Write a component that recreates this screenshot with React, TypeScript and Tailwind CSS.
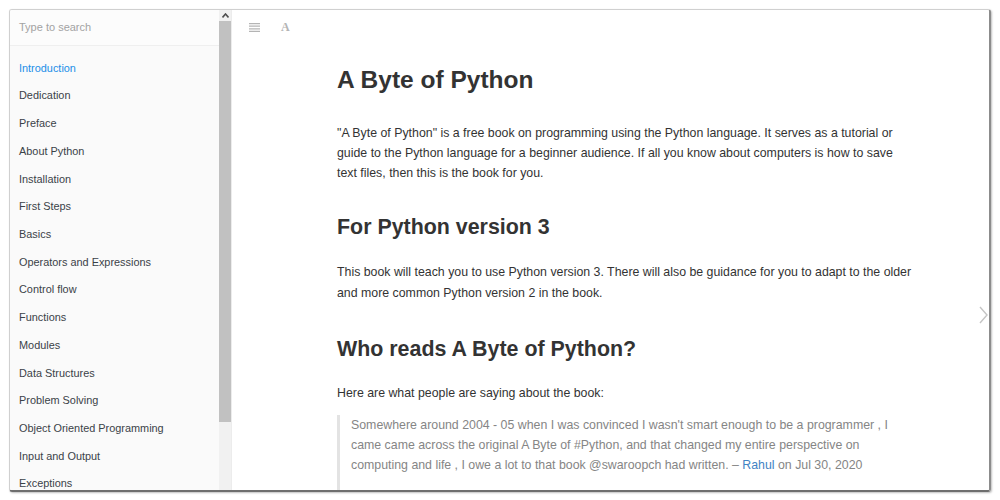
import React from "react";

const items = [
  "Introduction",
  "Dedication",
  "Preface",
  "About Python",
  "Installation",
  "First Steps",
  "Basics",
  "Operators and Expressions",
  "Control flow",
  "Functions",
  "Modules",
  "Data Structures",
  "Problem Solving",
  "Object Oriented Programming",
  "Input and Output",
  "Exceptions",
  "Standard Library",
];

export default function App() {
  return (
    <div
      className="w-[1000px] h-[500px] bg-white overflow-hidden pt-[9px] pl-[9px]"
      style={{ fontFamily: '"Liberation Sans", Arial, sans-serif' }}
    >
      <div className="w-[982px] h-[483px] flex overflow-hidden rounded-[3px] border-t border-l border-r-2 border-b-2 border-t-[#d0d0d0] border-l-[#d0d0d0] border-r-[#8c8c8c] border-b-[#6e6e6e] shadow-[1px_1px_2px_rgba(0,0,0,0.25)]">
        {/* Sidebar */}
        <div className="w-[209px] shrink-0 flex flex-col bg-[#fafafa] overflow-hidden">
          <div className="h-[36px] shrink-0 bg-[#fcfcfc] border-b border-[#efefef] flex items-center pl-[9px] pb-[1px]">
            <span className="text-[11px] text-[#a3a3a3]">Type to search</span>
          </div>
          <ul className="pt-[8px]">
            {items.map((it, i) => (
              <li
                key={it}
                className={`h-[27.73px] flex items-center pl-[9px] text-[10.9px] ${
                  i === 0 ? "text-[#1b8fe8]" : "text-[#3a4248]"
                }`}
              >
                {it}
              </li>
            ))}
          </ul>
        </div>
        {/* Scrollbar */}
        <div className="w-[13px] shrink-0 bg-[#f1f1f1] flex flex-col items-center border-r border-[#ececec]">
          <div className="h-[10px] w-full flex items-center justify-center">
            <svg width="7" height="5" viewBox="0 0 7 5">
              <path d="M0.5 4.5 L3.5 1 L6.5 4.5" fill="none" stroke="#505050" strokeWidth="1.6" />
            </svg>
          </div>
          <div className="w-[12px] h-[401px] mt-[1px] bg-[#c1c1c1]" />
        </div>
        {/* Main */}
        <div className="flex-1 relative bg-white overflow-hidden">
          <div className="h-[34px] flex items-center pl-[17px] gap-[21px]">
            <svg width="11" height="9" viewBox="0 0 11 9">
              <g stroke="#b4b4b4" strokeWidth="1.2">
                <line x1="0" y1="0.6" x2="11" y2="0.6" />
                <line x1="0" y1="3.2" x2="11" y2="3.2" />
                <line x1="0" y1="5.8" x2="11" y2="5.8" />
                <line x1="0" y1="8.4" x2="11" y2="8.4" />
              </g>
            </svg>
            <span
              className="text-[12px] text-[#b4b4b4] font-bold leading-none"
              style={{ fontFamily: '"Liberation Serif", "Times New Roman", serif' }}
            >
              A
            </span>
          </div>
          <div className="pl-[105px] pt-[21px]">
            <div className="w-[577px] text-[#333333]">
              <h1 className="text-[24.5px] leading-[30px] font-bold mb-[28px]">A Byte of Python</h1>
              <p className="text-[12.35px] leading-[20px]">
                "A Byte of Python" is a free book on programming using the Python language. It serves as a tutorial or guide to the Python language for a beginner audience. If all you know about computers is how to save text files, then this is the book for you.
              </p>
              <h2 className="text-[21.4px] leading-[26px] font-bold mt-[31px] mb-[22px]">For Python version 3</h2>
              <p className="text-[12.35px] leading-[21px]">
                This book will teach you to use Python version 3. There will also be guidance for you to adapt to the older and more common Python version 2 in the book.
              </p>
              <h2 className="text-[21.4px] leading-[26px] font-bold mt-[32px] mb-[21px]">Who reads A Byte of Python?</h2>
              <p className="text-[12.35px] leading-[20px]">Here are what people are saying about the book:</p>
              <blockquote className="mt-[12px] border-l-[3px] border-[#e3e3e3] pl-[11px] text-[12.35px] leading-[20px] text-[#858585] pb-[20px]">
                Somewhere around 2004 - 05 when I was convinced I wasn't smart enough to be a programmer , I came came across the original A Byte of #Python, and that changed my entire perspective on computing and life , I owe a lot to that book @swaroopch had written. – <span className="text-[#4183c4]">Rahul</span> on Jul 30, 2020
              </blockquote>
            </div>
          </div>
          <div className="absolute right-[1px] top-[296px]">
            <svg width="9" height="18" viewBox="0 0 9 18">
              <path d="M1 1 L8 9 L1 17" fill="none" stroke="#c4c4c4" strokeWidth="1.4" />
            </svg>
          </div>
        </div>
      </div>
    </div>
  );
}
